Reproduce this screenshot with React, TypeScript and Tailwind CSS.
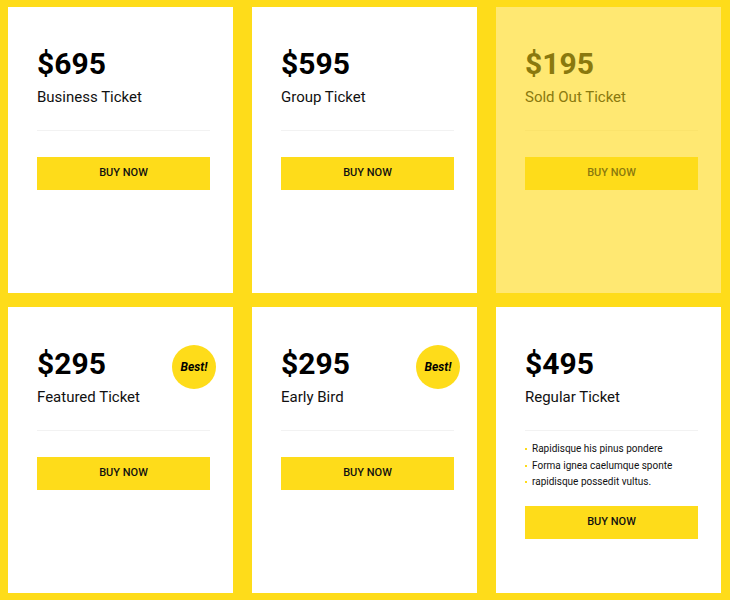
import React from "react";

type Ticket = {
  price: string;
  title: string;
  soldOut?: boolean;
  best?: boolean;
  list?: string[];
};

const tickets: Ticket[] = [
  { price: "$695", title: "Business Ticket" },
  { price: "$595", title: "Group Ticket" },
  { price: "$195", title: "Sold Out Ticket", soldOut: true },
  { price: "$295", title: "Featured Ticket", best: true },
  { price: "$295", title: "Early Bird", best: true },
  {
    price: "$495",
    title: "Regular Ticket",
    list: [
      "Rapidisque his pinus pondere",
      "Forma ignea caelumque sponte",
      "rapidisque possedit vultus.",
    ],
  },
];

function Card({ t }: { t: Ticket }) {
  const sold = !!t.soldOut;
  return (
    <div
      className={
        "relative h-[286px] pl-[29px] pr-[23px] pt-[38px] " +
        (sold ? "bg-[#FFE872]" : "bg-white")
      }
    >
      {t.best && (
        <div className="absolute left-[164px] top-[38px] flex h-[44px] w-[44px] items-center justify-center rounded-full bg-[#FEDC1A]">
          <span className="text-[12px] font-bold italic leading-none text-black">Best!</span>
        </div>
      )}
      <div
        className={
          "text-[30px] font-bold leading-[38px] " + (sold ? "text-[#8A790E]" : "text-black")
        }
      >
        {t.price}
      </div>
      <div
        className={
          "mt-[2px] text-[15px] leading-[24px] " + (sold ? "text-[#8A790E]" : "text-[#111]")
        }
      >
        {t.title}
      </div>
      <div className={"mt-[21px] h-px " + (sold ? "bg-[#FBE36C]" : "bg-[#F2F2F2]")} />
      {t.list && (
        <ul className="mt-[10px]">
          {t.list.map((l) => (
            <li key={l} className="flex items-center text-[10px] leading-[16.5px] text-[#111]">
              <span className="mr-[5px] h-[2px] w-[2px] bg-[#FEDC1A]" />
              {l}
            </li>
          ))}
        </ul>
      )}
      <button
        className={
          "flex h-[33px] w-full items-center justify-center bg-[#FEDC1A] text-[11px] font-medium " +
          (t.list ? "mt-[15px] " : "mt-[26px] ") +
          (sold ? "text-[#8A790E]" : "text-[#111]")
        }
      >
        BUY NOW
      </button>
    </div>
  );
}

export default function App() {
  return (
    <div
      className="grid h-[600px] w-[730px] grid-cols-3 gap-x-[19px] gap-y-[14px] bg-[#FEDC1A] pb-[7px] pl-[8px] pr-[9px] pt-[7px]"
      style={{ fontFamily: "Roboto, 'Liberation Sans', sans-serif" }}
    >
      {tickets.map((t, i) => (
        <Card key={i} t={t} />
      ))}
    </div>
  );
}
